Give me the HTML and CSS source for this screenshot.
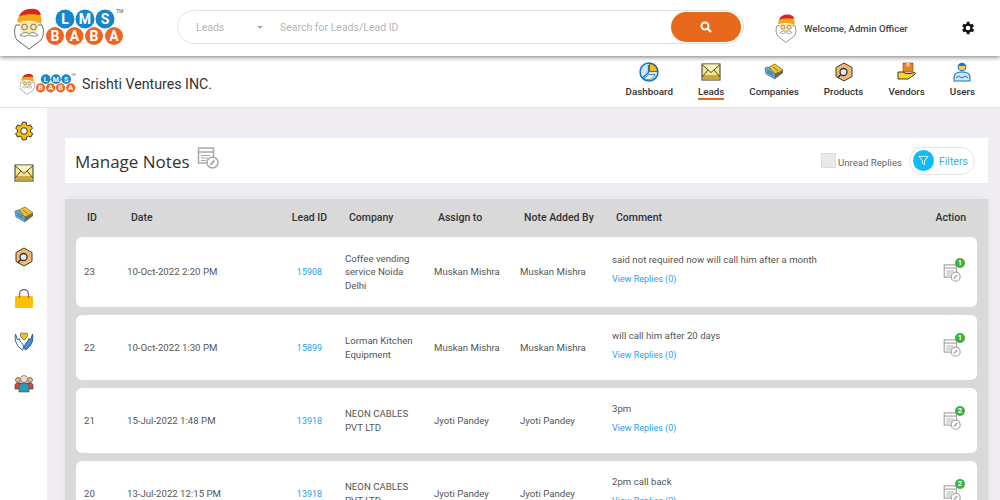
FILE: index.html
```html
<!DOCTYPE html>
<html lang="en">
<head>
    <meta charset="UTF-8">
    <meta name="viewport" content="width=device-width, initial-scale=1.0">
    <title>Manage Notes</title>
    <link rel="stylesheet" href="styles.css">
</head>
<body>

    <svg class="icon-defs" xmlns="http://www.w3.org/2000/svg">
        <symbol id="i-santa" viewBox="0 0 30 42">
            <path d="M2 17c-2 4-2 11 1 15l12 9 12-9c3-4 3-11 1-15z" fill="#fff" stroke="#666" stroke-width="1"/>
            <path d="M6 14h18v6c-1 4-5 6-9 6s-8-2-9-6z" fill="#f9e6a5"/>
            <circle cx="10.500" cy="19" r="2.800" fill="none" stroke="#666" stroke-width=".9"/>
            <circle cx="19.500" cy="19" r="2.800" fill="none" stroke="#666" stroke-width=".9"/>
            <path d="M6 27c3-3 7-3 9-1 2-2 6-2 9 1-3 2-7 1-9 0-2 1-6 2-9 0z" fill="#fff" stroke="#666" stroke-width=".8"/>
            <path d="M5 9C6 3 13 0 21 1c4 1 5 3 6 6z" fill="#d8261c"/>
            <path d="M4 15c-1-4 0-6 2-7 6-2 14-2 20-1 2 3 2 6 1 9-7-4-16-4-23-1z" fill="#f5a81c"/>
        </symbol>
        <symbol id="i-logo" viewBox="0 0 111 43">
            <use href="#i-santa" x="0" y="1" width="30" height="42"/>
            <g fill="#1586c9">
                <circle cx="51" cy="12" r="9.500"/><circle cx="71" cy="12" r="9.500"/><circle cx="91" cy="12" r="9.500"/>
            </g>
            <g fill="#ee6423">
                <circle cx="41" cy="29" r="9"/><circle cx="60.500" cy="29" r="9"/><circle cx="80" cy="29" r="9"/><circle cx="100" cy="29" r="9"/>
            </g>
            <g class="logo-letters">
                <text x="51" y="17">L</text><text x="71" y="17">M</text><text x="91" y="17">S</text>
                <text x="41" y="34">B</text><text x="60.500" y="34">A</text><text x="80" y="34">B</text><text x="100" y="34">A</text>
            </g>
            <text class="logo-tm" x="102" y="6">TM</text>
        </symbol>
        <symbol id="i-pie" viewBox="0 0 20 20">
            <circle cx="10" cy="10" r="9" fill="#cfe6f7" stroke="#1c75bc" stroke-width="1.500"/>
            <path d="M10.500 1.500a8.500 8.500 0 0 1 8 8h-8z" fill="#fdb913" stroke="#1c3f6e" stroke-width=".7"/>
            <path d="M9.500 3v7.500l-5.500 5" fill="none" stroke="#1c75bc" stroke-width="1.300"/>
            <path d="M5 16.500c4 2 9 1 11-4h-6z" fill="#fff" stroke="#1c75bc" stroke-width=".8"/>
        </symbol>
        <symbol id="i-mail" viewBox="0 0 20 20">
            <rect x="1" y="2" width="18" height="16" fill="#fbe58a" stroke="#333" stroke-width="1"/>
            <rect x="1.500" y="13" width="17" height="4.500" fill="#c9a93f"/>
            <path d="M1 2.500l9 8 9-8M1 15l6-7M19 15l-6-7" fill="#fff3bd" stroke="#333" stroke-width=".9"/>
        </symbol>
        <symbol id="i-company" viewBox="0 0 20 20">
            <path d="M1 6l3-1 7 4v8L2 12z" fill="#6fa9d6" stroke="#3a6f9a" stroke-width=".7"/>
            <path d="M5 5l6-3 8 6-8 4z" fill="#f2c230" stroke="#6e5a1a" stroke-width=".7"/>
            <path d="M11 12l8-4v3l-8 6z" fill="#6b6b4a"/>
            <path d="M3 8l6 3.500M3 10l6 3.500M9 5l5 4" stroke="#24577f" stroke-width=".7"/>
        </symbol>
        <symbol id="i-product" viewBox="0 0 20 20">
            <path d="M10 1l8 4.500v9L10 19l-8-4.500v-9z" fill="#f1b878" stroke="#4a3820" stroke-width="1"/>
            <circle cx="9.500" cy="10" r="3.500" fill="#e8eff3" stroke="#333" stroke-width="1.300"/>
            <path d="M7 12.500l-3 3" stroke="#333" stroke-width="1.600"/>
        </symbol>
        <symbol id="i-vendor" viewBox="0 0 20 20">
            <rect x="6" y="1" width="10" height="9" fill="#ef7f2d" stroke="#8a4310" stroke-width=".6"/>
            <rect x="9.500" y="1" width="3" height="3.500" fill="#fbd28b"/>
            <path d="M1 10h5l3 1.500h4l5-1c1 1 0 2-1 2.500l-6 4H1z" fill="#fbd52a" stroke="#40391a" stroke-width="1"/>
        </symbol>
        <symbol id="i-user" viewBox="0 0 20 20">
            <circle cx="10" cy="5" r="3.800" fill="#fdc75b" stroke="#1c75bc" stroke-width="1.100"/>
            <path d="M6.500 4h7v-1c-2-2-5-2-7 0z" fill="#1c75bc"/>
            <path d="M2 19v-4c0-3 3-5 8-5s8 2 8 5v4z" fill="#cfe6f7" stroke="#1c75bc" stroke-width="1.100"/>
            <path d="M4 16l3-2 3 2 3-2 3 2" fill="none" stroke="#1c75bc" stroke-width="1"/>
        </symbol>
        <symbol id="i-cog" viewBox="2 2 20 20">
            <path d="M19.400 13a7.600 7.600 0 0 0 0-2l2.100-1.600-2-3.500-2.500 1a7.500 7.500 0 0 0-1.700-1L15.300 3.200h-4l-.4 2.700a7.500 7.500 0 0 0-1.700 1l-2.500-1-2 3.500L6.700 11a7.600 7.600 0 0 0 0 2l-2.100 1.600 2 3.500 2.500-1c.5.400 1.100.700 1.700 1l.4 2.700h4l.4-2.700c.6-.3 1.200-.6 1.700-1l2.500 1 2-3.500z" transform="translate(-1)"/>
            <circle cx="12" cy="12" r="3.300" fill="var(--hole)"/>
        </symbol>
        <symbol id="i-bag" viewBox="0 0 20 20">
            <rect x="1" y="7" width="18" height="12" rx="1.500" fill="#fcbf0a"/>
            <path d="M5.500 9V5a4.500 4.500 0 0 1 9 0v4" fill="none" stroke="#8a5aa8" stroke-width="1.300"/>
        </symbol>
        <symbol id="i-hands" viewBox="0 0 20 20">
            <path d="M10 9C7 7 6 5 6.500 3S9 1.500 10 3c1-1.500 3-1.500 3.500 0S13 7 10 9z" fill="#fcbf0a" stroke="#1f5f95" stroke-width=".7"/>
            <path d="M1.500 3C.5 8 1.500 13 6 17l2.500 2 1-2c0-3-1-5-3.500-7L5 7.500 3.500 9z" fill="#fff" stroke="#1f5f95" stroke-width="1"/>
            <path d="M18.500 3c1 5 0 10-4.500 14l-2.500 2-1-2c0-3 1-5 3.500-7l1-2.500L16.500 9z" fill="#4a90d0" stroke="#1f5f95" stroke-width="1"/>
        </symbol>
        <symbol id="i-team" viewBox="0 0 20 20">
            <circle cx="4" cy="7" r="2.500" fill="#f1b878" stroke="#333" stroke-width=".6"/>
            <circle cx="16" cy="7" r="2.500" fill="#f1b878" stroke="#333" stroke-width=".6"/>
            <path d="M1 16v-4c0-1 1-2 3-2h12c2 0 3 1 3 2v4z" fill="#d5473f" stroke="#333" stroke-width=".6"/>
            <circle cx="10" cy="6" r="3.500" fill="#f6d9cc" stroke="#6c5a8a" stroke-width=".7"/>
            <path d="M5 19v-5c0-2 2-4 5-4s5 2 5 4v5z" fill="#2a9bb5" stroke="#1e5c70" stroke-width=".6"/>
        </symbol>
        <symbol id="i-note" viewBox="0 0 22 22">
            <path d="M13 16H1.500V1h15v9" fill="#fff" stroke="#a9a9a9" stroke-width="1.500"/>
            <path d="M2 5h14" stroke="#a9a9a9" stroke-width="1.500"/>
            <path d="M4 8.500h9M4 11h7M4 13.500h5" stroke="#a9a9a9" stroke-width="1.100"/>
            <circle cx="15.500" cy="15.500" r="5.500" fill="#fff" stroke="#a9a9a9" stroke-width="1.500"/>
            <path d="M13.300 17.700l4.200-4.200" stroke="#a9a9a9" stroke-width="2"/>
        </symbol>
    </svg>

    <header class="topbar">
        <svg class="logo"><use href="#i-logo"/></svg>
        <div class="search">
            <span class="search-type">Leads</span>
            <span class="caret"></span>
            <span class="search-input">Search for Leads/Lead ID</span>
            <button class="search-btn" type="button">
                <svg viewBox="0 0 12 12" width="12" height="12"><circle cx="5" cy="5" r="3.500" fill="none" stroke="#fff" stroke-width="2"/><path d="M7.500 7.500L11 11" stroke="#fff" stroke-width="2.200"/></svg>
            </button>
        </div>
        <div class="welcome">
            <svg class="welcome-pic"><use href="#i-santa"/></svg>
            <span>Welcome, Admin Officer</span>
        </div>
        <svg class="settings"><use href="#i-cog"/></svg>
    </header>

    <nav class="subnav">
        <div class="brand">
            <svg class="brand-logo"><use href="#i-logo"/></svg>
            <span>Srishti Ventures INC.</span>
        </div>
        <div class="menu">
            <a class="menu-item"><svg><use href="#i-pie"/></svg><span>Dashboard</span></a>
            <a class="menu-item active"><svg><use href="#i-mail"/></svg><span>Leads</span></a>
            <a class="menu-item"><svg><use href="#i-company"/></svg><span>Companies</span></a>
            <a class="menu-item"><svg><use href="#i-product"/></svg><span>Products</span></a>
            <a class="menu-item"><svg><use href="#i-vendor"/></svg><span>Vendors</span></a>
            <a class="menu-item"><svg><use href="#i-user"/></svg><span>Users</span></a>
        </div>
    </nav>

    <div class="page">
        <aside class="sidebar">
            <svg class="side-cog"><use href="#i-cog"/></svg>
            <svg><use href="#i-mail"/></svg>
            <svg><use href="#i-company"/></svg>
            <svg><use href="#i-product"/></svg>
            <svg><use href="#i-bag"/></svg>
            <svg><use href="#i-hands"/></svg>
            <svg><use href="#i-team"/></svg>
        </aside>

        <main class="content">
            <div class="title-card">
                <h1>Manage Notes</h1>
                <svg class="title-icon"><use href="#i-note"/></svg>
                <div class="unread">
                    <span class="checkbox"></span>
                    <span>Unread Replies</span>
                </div>
                <div class="filters">
                    <span class="filter-circle">
                        <svg viewBox="0 0 12 12" width="11" height="11"><path d="M1 1.500h10L7.200 6.300V10.500L4.800 9V6.300z" fill="none" stroke="#fff" stroke-width="1"/></svg>
                    </span>
                    <span class="filter-label">Filters</span>
                </div>
            </div>

            <section class="notes">
                <div class="cols head">
                    <div class="id">ID</div>
                    <div>Date</div>
                    <div class="lead">Lead ID</div>
                    <div>Company</div>
                    <div>Assign to</div>
                    <div>Note Added By</div>
                    <div>Comment</div>
                    <div class="action">Action</div>
                </div>

                <div class="cols row">
                    <div>23</div>
                    <div>10-Oct-2022 2:20 PM</div>
                    <div class="lead"><a>15908</a></div>
                    <div>Coffee vending service Noida Delhi</div>
                    <div>Muskan Mishra</div>
                    <div>Muskan Mishra</div>
                    <div class="comment"><p>said not required now will call him after a month</p><a>View Replies (0)</a></div>
                    <div class="action"><span class="note-btn"><svg><use href="#i-note"/></svg><b class="badge">1</b></span></div>
                </div>

                <div class="cols row">
                    <div>22</div>
                    <div>10-Oct-2022 1:30 PM</div>
                    <div class="lead"><a>15899</a></div>
                    <div>Lorman Kitchen Equipment</div>
                    <div>Muskan Mishra</div>
                    <div>Muskan Mishra</div>
                    <div class="comment"><p>will call him after 20 days</p><a>View Replies (0)</a></div>
                    <div class="action"><span class="note-btn"><svg><use href="#i-note"/></svg><b class="badge">1</b></span></div>
                </div>

                <div class="cols row">
                    <div>21</div>
                    <div>15-Jul-2022 1:48 PM</div>
                    <div class="lead"><a>13918</a></div>
                    <div>NEON CABLES PVT LTD</div>
                    <div>Jyoti Pandey</div>
                    <div>Jyoti Pandey</div>
                    <div class="comment"><p>3pm</p><a>View Replies (0)</a></div>
                    <div class="action"><span class="note-btn"><svg><use href="#i-note"/></svg><b class="badge">2</b></span></div>
                </div>

                <div class="cols row">
                    <div>20</div>
                    <div>13-Jul-2022 12:15 PM</div>
                    <div class="lead"><a>13918</a></div>
                    <div>NEON CABLES PVT LTD</div>
                    <div>Jyoti Pandey</div>
                    <div>Jyoti Pandey</div>
                    <div class="comment"><p>2pm call back</p><a>View Replies (0)</a></div>
                    <div class="action"><span class="note-btn"><svg><use href="#i-note"/></svg><b class="badge">2</b></span></div>
                </div>
            </section>
        </main>
    </div>

</body>
</html>
```

FILE: styles.css
```css
* {
    margin: 0;
    padding: 0;
    box-sizing: border-box;
    font-family: 'Roboto', sans-serif;
}
html, body {
    height: 500px;
    overflow: hidden;
}
body {
    background: #efecf2;
    color: #555;
    font-size: 9.65px;
}
.icon-defs {
    display: none;
}
.logo-letters text {
    fill: #fff;
    font-size: 14px;
    font-weight: 700;
    text-anchor: middle;
}
.logo-tm {
    fill: #555;
    font-size: 5px;
}

/* top bar */
.topbar {
    position: relative;
    z-index: 2;
    display: flex;
    align-items: center;
    height: 56px;
    padding: 0 24px 0 14px;
    background: #fff;
    box-shadow: 0 1px 5px rgba(0, 0, 0, 0.55);
}
.logo {
    width: 111px;
    height: 43px;
    margin-right: 52px;
}
.search {
    display: flex;
    align-items: center;
    width: 567px;
    height: 34px;
    margin-right: 31px;
    margin-bottom: 2px;
    padding: 0 2px 0 18px;
    border: 1px solid #e2e2e2;
    border-radius: 17px;
    color: #b5b5b5;
    font-size: 10.5px;
}
.search-type {
    width: 61px;
}
.caret {
    width: 0;
    height: 0;
    border-left: 3.5px solid transparent;
    border-right: 3.5px solid transparent;
    border-top: 3.5px solid #aaa;
}
.search-input {
    flex: 1;
    margin-left: 17px;
}
.search-btn {
    display: flex;
    align-items: center;
    justify-content: center;
    width: 70px;
    height: 30px;
    border: none;
    border-radius: 15px;
    background: #e8681c;
}
.welcome {
    display: flex;
    align-items: center;
    gap: 7px;
    color: #444;
    font-weight: 500;
    font-size: 9.65px;
}
.welcome-pic {
    width: 22px;
    height: 29px;
}
.settings {
    --hole: #fff;
    width: 14px;
    height: 14px;
    margin-left: auto;
    margin-right: 1px;
    fill: #111;
}

/* second nav */
.subnav {
    display: flex;
    justify-content: space-between;
    height: 52px;
    padding: 0 25px 0 19px;
    background: #fff;
    border-bottom: 1px solid #e6e6e6;
}
.brand {
    display: flex;
    align-items: center;
    gap: 5px;
    height: 56px;
    color: #333;
    font-family: 'Open Sans', sans-serif;
    font-size: 14.2px;
}
.brand-logo {
    width: 58px;
    height: 22px;
}
.menu {
    display: flex;
    gap: 25px;
}
.menu-item {
    display: flex;
    flex-direction: column;
    align-items: center;
    padding-top: 6px;
    color: #333;
    font-size: 9.8px;
    font-weight: 500;
}
.menu-item svg {
    width: 20px;
    height: 20px;
    margin-bottom: 4px;
}
.menu-item.active span {
    padding-bottom: 1px;
    border-bottom: 2px solid #e8681c;
}

/* page body */
.page {
    display: flex;
    height: 392px;
}
.sidebar {
    display: flex;
    flex-direction: column;
    align-items: center;
    gap: 22px;
    width: 47px;
    padding-top: 13px;
    background: #fff;
}
.sidebar svg {
    width: 20px;
    height: 20px;
    flex: none;
}
.side-cog {
    --hole: #fff;
    fill: #fcbf0a;
    stroke: #333;
    stroke-width: 1;
}
.content {
    flex: 1;
    padding: 30px 12px 0 18px;
}
.title-card {
    display: flex;
    align-items: center;
    height: 45px;
    padding: 0 13px 0 10px;
    background: #fff;
}
h1 {
    margin-top: 2px;
    color: #333;
    font-family: 'Open Sans', sans-serif;
    font-size: 17px;
    font-weight: 400;
}
.title-icon {
    align-self: flex-start;
    width: 22px;
    height: 22px;
    margin: 9px 0 0 7px;
}
.unread {
    display: flex;
    align-items: flex-end;
    gap: 2px;
    margin-left: auto;
    margin-right: 7px;
    color: #666;
}
.checkbox {
    width: 15px;
    height: 15px;
    background: #e9e9e9;
    border: 1px solid #ddd;
}
.filters {
    display: flex;
    align-items: center;
    gap: 5px;
    width: 66px;
    height: 28px;
    padding-left: 3px;
    border: 1px solid #e4e4e4;
    border-radius: 14px;
    color: #3ab0cf;
    font-size: 10.5px;
}
.filter-label {
    margin-top: 1px;
}
.filter-circle {
    display: flex;
    align-items: center;
    justify-content: center;
    width: 21px;
    height: 21px;
    border-radius: 50%;
    background: #0bbcf5;
}

/* notes table */
.notes {
    display: flex;
    flex-direction: column;
    gap: 8px;
    margin-top: 16px;
    padding: 0 11px 20px;
    background: #d9d9d9;
    box-shadow: 0 0 8px rgba(0, 0, 0, 0.06);
}
.cols {
    display: grid;
    grid-template-columns: 43px 163px 55px 89px 86px 92px 1fr 60px;
    align-items: center;
}
.head {
    height: 30px;
    margin-top: 3px;
    margin-bottom: -3px;
    color: #333;
    font-size: 10.5px;
    font-weight: 500;
}
.head > div {
    padding-left: 12px;
}
.head > .id {
    padding-left: 11px;
}
.row {
    min-height: 65px;
    padding: 15px 0;
    background: #fff;
    border-radius: 6px;
    line-height: 13.4px;
}
.row > div {
    padding-left: 8px;
    padding-right: 6px;
}
.head > .lead,
.row > .lead {
    padding: 0;
    text-align: center;
}
.head > .action {
    padding: 0 11px 0 0;
    text-align: right;
}
.row > .action {
    display: flex;
    justify-content: flex-end;
    padding: 0 16px 0 0;
}
.row a {
    color: #2a9df4;
    font-size: 9px;
}
.row p {
    margin-bottom: 5.6px;
}
.row > .comment {
    margin-top: -5px;
}
.note-btn {
    position: relative;
    display: block;
    width: 18px;
    height: 18px;
    margin-top: 1px;
}
.note-btn svg {
    display: block;
    width: 18px;
    height: 18px;
}
.badge {
    position: absolute;
    top: -6px;
    right: -4px;
    width: 10px;
    height: 10px;
    border-radius: 50%;
    background: #3cb043;
    color: #fff;
    font-size: 7.5px;
    line-height: 10px;
    text-align: center;
}
```
